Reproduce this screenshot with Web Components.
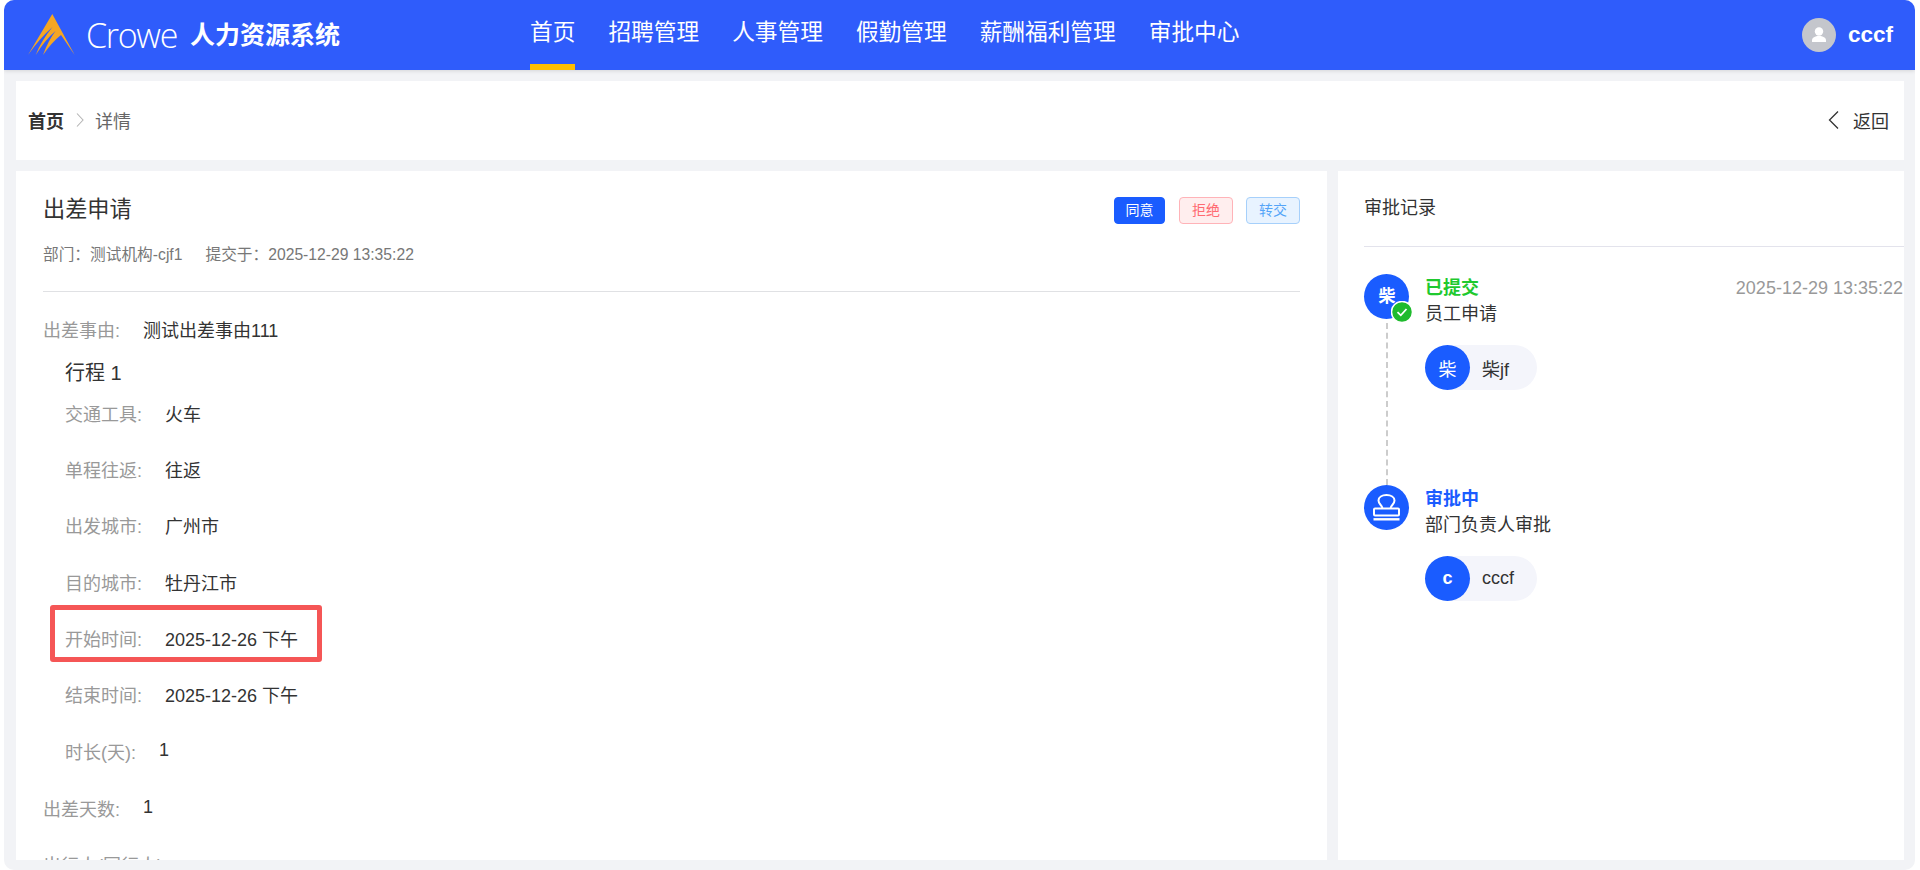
<!DOCTYPE html>
<html lang="zh-CN">
<head>
<meta charset="utf-8">
<title>出差申请</title>
<style>
  html, body { margin: 0; height: 870px; overflow: hidden; background: #fff; }
  body { font-family: "Liberation Sans", "Noto Sans CJK SC", sans-serif; color: #333; }
</style>
</head>
<body>
<app-shell>
  <app-header slot="header" user="cccf"></app-header>
  <bread-crumb slot="crumb"></bread-crumb>
  <detail-panel slot="left">
    <field-row label="出差事由:" value="测试出差事由111"></field-row>
    <trip-group heading="行程 1">
      <field-row label="交通工具:" value="火车"></field-row>
      <field-row label="单程往返:" value="往返"></field-row>
      <field-row label="出发城市:" value="广州市"></field-row>
      <field-row label="目的城市:" value="牡丹江市"></field-row>
      <field-row label="开始时间:" value="2025-12-26 下午" marked></field-row>
      <field-row label="结束时间:" value="2025-12-26 下午"></field-row>
      <field-row label="时长(天):" value="1"></field-row>
    </trip-group>
    <field-row label="出差天数:" value="1"></field-row>
    <field-row label="出行人(同行人):" value=""></field-row>
  </detail-panel>
  <approval-panel slot="right">
    <approval-step status="已提交" tone="done" desc="员工申请" time="2025-12-29 13:35:22" mark="柴" person="柴jf" chip="柴" line></approval-step>
    <approval-step status="审批中" tone="active" desc="部门负责人审批" person="cccf" chip="c"></approval-step>
  </approval-panel>
</app-shell>

<script>
class AppShell extends HTMLElement {
  connectedCallback() {
    this.attachShadow({ mode: "open" }).innerHTML = `
      <style>
        :host { display: flex; flex-direction: column; height: 870px; margin: 0 5px 0 4px; background: #f2f3f6; border-radius: 10px; overflow: hidden; }
        .main { flex: 1; min-height: 0; display: flex; flex-direction: column; gap: 11px; padding: 11px 11px 10px 12px; }
        .cols { flex: 1; min-height: 0; display: flex; gap: 11px; }
      </style>
      <slot name="header"></slot>
      <div class="main">
        <slot name="crumb"></slot>
        <div class="cols">
          <slot name="left"></slot>
          <slot name="right"></slot>
        </div>
      </div>`;
  }
}
customElements.define("app-shell", AppShell);

class AppHeader extends HTMLElement {
  connectedCallback() {
    const items = ["首页", "招聘管理", "人事管理", "假勤管理", "薪酬福利管理", "审批中心"];
    const nav = items.map((t, i) => `<a class="${i === 0 ? "on" : ""}">${t}</a>`).join("");
    this.attachShadow({ mode: "open" }).innerHTML = `
      <style>
        :host { display: flex; align-items: center; flex: none; height: 70px; padding: 0 22px 0 24px; background: #2f5cfb; color: #fff; position: relative; box-shadow: 0 1px 4px rgba(0,0,0,.12); }
        .brand { flex: none; width: 502px; display: flex; align-items: center; }
        .brand svg { display: block; margin-top: -1px; }
        .crowe { font-family: "Open Sans", sans-serif; font-weight: 300; font-size: 34px; letter-spacing: -1.3px; margin-left: 11px; line-height: 70px; }
        .sys { font-size: 25px; font-weight: 700; margin-left: 13px; line-height: 70px; }
        nav { display: flex; gap: 33px; height: 70px; }
        a { display: block; font-size: 22.7px; line-height: 64px; height: 70px; box-sizing: border-box; border-bottom: 6px solid transparent; white-space: nowrap; }
        a.on { border-bottom-color: #ffbf00; }
        .user { margin-left: auto; display: flex; align-items: center; gap: 12px; font-size: 22.5px; font-weight: 700; }
        .user svg { display: block; }
      </style>
      <div class="brand">
        <svg width="47" height="42" viewBox="0 0 47 42"><path fill="#f5a623" d="M24.3 0 L46.7 41 L33 21 Q24 28 15 41 Q20 27 27.5 17 Q17 26 7.7 41 Q13 27 24.5 13 Q11 25 0 41 Z"/></svg>
        <span class="crowe">Crowe</span>
        <span class="sys">人力资源系统</span>
      </div>
      <nav>${nav}</nav>
      <div class="user">
        <svg width="34" height="34" viewBox="0 0 34 34"><circle cx="17" cy="17" r="17" fill="#c4c6cc"/><circle cx="17" cy="13.5" r="4.2" fill="#fff"/><path fill="#fff" d="M10 24 v-1.5 c0-3 3-4.5 7-4.5 s7 1.500 7 4.500 V24 Z"/></svg>
        <span>${this.getAttribute("user")}</span>
      </div>`;
  }
}
customElements.define("app-header", AppHeader);

class BreadCrumb extends HTMLElement {
  connectedCallback() {
    this.attachShadow({ mode: "open" }).innerHTML = `
      <style>
        :host { display: flex; align-items: center; flex: none; height: 79px; box-sizing: border-box; padding: 0 15px 2px 12px; background: #fff; font-size: 18px; }
        b { color: #333; font-weight: 700; }
        .sep { margin: 0 11px 0 12px; display: block; }
        .cur { color: #666; }
        .back { margin-left: auto; display: flex; align-items: center; gap: 14px; color: #333; }
        .back svg { display: block; }
      </style>
      <b>首页</b>
      <svg class="sep" width="8" height="14" viewBox="0 0 8 14"><path d="M1 .5 L7 7 L1 13.5" fill="none" stroke="#b5b5b5" stroke-width="1.100"/></svg>
      <span class="cur">详情</span>
      <div class="back">
        <svg width="11" height="18" viewBox="0 0 11 18"><path d="M10 .5 L1.500 9 L10 17.500" fill="none" stroke="#333" stroke-width="1.300"/></svg>
        <span>返回</span>
      </div>`;
  }
}
customElements.define("bread-crumb", BreadCrumb);

class ActionButton extends HTMLElement {
  connectedCallback() {
    this.attachShadow({ mode: "open" }).innerHTML = `
      <style>
        :host { display: block; box-sizing: border-box; height: 27px; padding: 0 12px; font-size: 14px; line-height: 25px; border: 1px solid; border-radius: 4px; white-space: nowrap; }
        :host([kind="ok"]) { background: #1a5cff; border-color: #1a5cff; color: #fff; padding: 0 10.5px; margin-right: 1px; }
        :host([kind="no"]) { background: #ffeeee; border-color: #ffb3b8; color: #ff6b72; }
        :host([kind="pass"]) { background: #e8f3ff; border-color: #a6d0fb; color: #55a5f8; }
      </style>
      <slot></slot>`;
  }
}
customElements.define("action-button", ActionButton);

class DetailPanel extends HTMLElement {
  connectedCallback() {
    this.attachShadow({ mode: "open" }).innerHTML = `
      <style>
        :host { display: block; flex: none; width: 1311px; height: 689px; box-sizing: border-box; padding: 26px 27px 0; background: #fff; overflow: hidden; }
        .top { display: flex; justify-content: space-between; align-items: flex-start; height: 27px; }
        h1 { margin: -1px 0 0; font-size: 22.2px; font-weight: 400; color: #333; line-height: 27px; }
        .btns { display: flex; gap: 13px; }
        .meta { display: flex; gap: 23px; margin-top: 19px; font-size: 15.7px; line-height: 24px; color: #777; }
        hr { border: 0; border-top: 1px solid #e0e1e4; margin: 24px 0 9px; }
      </style>
      <div class="top">
        <h1>出差申请</h1>
        <div class="btns">
          <action-button kind="ok">同意</action-button>
          <action-button kind="no">拒绝</action-button>
          <action-button kind="pass">转交</action-button>
        </div>
      </div>
      <div class="meta"><span>部门：测试机构-cjf1</span><span>提交于：2025-12-29 13:35:22</span></div>
      <hr>
      <slot></slot>`;
  }
}
customElements.define("detail-panel", DetailPanel);

class TripGroup extends HTMLElement {
  connectedCallback() {
    this.attachShadow({ mode: "open" }).innerHTML = `
      <style>
        :host { display: block; padding: 0 0 1px 22px; }
        h2 { margin: 0; padding-top: 5px; font-size: 20px; font-weight: 400; line-height: 22.4px; color: #333; }
      </style>
      <h2>${this.getAttribute("heading")}</h2>
      <slot></slot>`;
  }
}
customElements.define("trip-group", TripGroup);

class FieldRow extends HTMLElement {
  connectedCallback() {
    const marked = this.hasAttribute("marked") ? `<div class="mark"></div>` : "";
    this.attachShadow({ mode: "open" }).innerHTML = `
      <style>
        :host { display: flex; align-items: center; height: 56.3px; font-size: 18px; position: relative; white-space: nowrap; }
        .k { color: #999; margin-right: 23px; }
        .v { color: #333; }
        .mark { position: absolute; left: -15px; top: -5px; width: 272px; height: 57px; box-sizing: border-box; border: 5px solid #f55656; border-radius: 3px; }
      </style>
      <span class="k">${this.getAttribute("label")}</span>
      <span class="v">${this.getAttribute("value")}</span>
      ${marked}`;
  }
}
customElements.define("field-row", FieldRow);

class ApprovalPanel extends HTMLElement {
  connectedCallback() {
    this.attachShadow({ mode: "open" }).innerHTML = `
      <style>
        :host { display: block; flex: 1; min-width: 0; height: 689px; box-sizing: border-box; padding: 25px 0 0 26px; background: #fff; overflow: hidden; }
        h3 { margin: 0; font-size: 18px; font-weight: 400; line-height: 24px; color: #333; }
        hr { border: 0; border-top: 1px solid #e3e3ec; margin: 26px 0 27px; }
      </style>
      <h3>审批记录</h3>
      <hr>
      <slot></slot>`;
  }
}
customElements.define("approval-panel", ApprovalPanel);

class ApprovalStep extends HTMLElement {
  connectedCallback() {
    const tone = this.getAttribute("tone");
    const time = this.getAttribute("time") || "";
    const stamp = `<svg width="27" height="27" viewBox="0 0 27 27" fill="none" stroke="#fff" stroke-width="2"><path d="M9.500 14.500 c0-3.200-4-4-4-8 c0-3.400 3.500-5.500 8-5.500 s8 2.100 8 5.500 c0 4-4 4.800-4 8"/><rect x="1" y="14.500" width="25" height="7" rx="1"/><path d="M.5 25.300 H26.500" stroke-width="2.400"/></svg>`;
    const mark = this.getAttribute("mark");
    const badge = tone === "done"
      ? `<svg class="badge" width="22" height="22" viewBox="0 0 22 22"><circle cx="11" cy="11" r="10.500" fill="#1fbb2e" stroke="#fff" stroke-width="1.500"/><path d="M6.500 11.200 L9.800 14.300 L15.500 8" fill="none" stroke="#fff" stroke-width="1.800"/></svg>`
      : "";
    this.attachShadow({ mode: "open" }).innerHTML = `
      <style>
        :host { display: flex; gap: 16px; min-height: 211px; font-size: 18px; }
        .rail { flex: none; width: 45px; display: flex; flex-direction: column; align-items: center; }
        .dot { position: relative; flex: none; box-sizing: border-box; width: 45px; height: 45px; border-radius: 50%; background: #1a5cff; color: #fff; font-size: 17px; font-weight: 700; display: flex; align-items: center; justify-content: center; }
        .mk { margin: -4px 0 0 1px; }
        .badge { position: absolute; right: -4px; bottom: -4px; }
        .line { flex: 1; margin-top: 4px; border-left: 2px dashed #ccc; }
        .body { flex: 1; min-width: 0; }
        .head { display: flex; justify-content: space-between; padding-top: 1px; line-height: 26px; }
        .status { font-weight: 700; color: ${tone === "done" ? "#1fc92f" : "#1a5cff"}; }
        .time { color: #999; padding-right: 1px; }
        .desc { line-height: 27px; color: #333; }
        person-chip { margin-top: 17px; }
      </style>
      <div class="rail">
        <div class="dot">${mark ? `<span class="mk">${mark}</span>` : stamp}${badge}</div>
        ${this.hasAttribute("line") ? `<div class="line"></div>` : ""}
      </div>
      <div class="body">
        <div class="head"><span class="status">${this.getAttribute("status")}</span><span class="time">${time}</span></div>
        <div class="desc">${this.getAttribute("desc")}</div>
        <person-chip initial="${this.getAttribute("chip")}" name="${this.getAttribute("person")}"></person-chip>
      </div>`;
  }
}
customElements.define("approval-step", ApprovalStep);

class PersonChip extends HTMLElement {
  connectedCallback() {
    const initial = this.getAttribute("initial");
    const weight = /^[a-z]/i.test(initial) ? 700 : 400;
    this.attachShadow({ mode: "open" }).innerHTML = `
      <style>
        :host { display: flex; align-items: center; width: 112px; height: 45px; border-radius: 23px; background: #f4f5fb; font-size: 18px; color: #333; }
        .av { flex: none; width: 45px; height: 45px; margin-right: 12px; border-radius: 50%; background: #1a5cff; color: #fff; font-weight: ${weight}; display: flex; align-items: center; justify-content: center; }
      </style>
      <span class="av">${initial}</span>
      <span>${this.getAttribute("name")}</span>`;
  }
}
customElements.define("person-chip", PersonChip);
</script>
</body>
</html>
